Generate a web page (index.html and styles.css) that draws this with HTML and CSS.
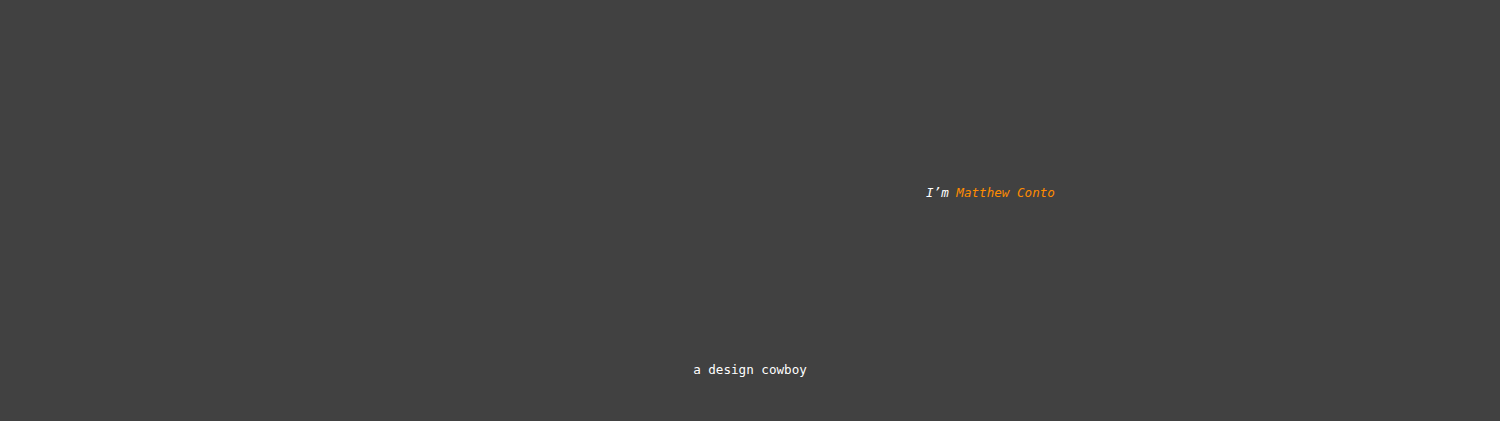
FILE: index.html
```html
<!DOCTYPE html>
<html>
<head>
<meta charset="utf-8">
<link rel="stylesheet" href="styles.css">
</head>
<body>
<main class="page">
  <section class="intro">
    <p class="name">I’m <span class="accent">Matthew Conto</span></p>
  </section>
  <section class="tagline">
    <p class="role">a design cowboy</p>
  </section>
</main>
</body>
</html>
```
FILE: styles.css
```css
html, body {
  margin: 0;
  padding: 0;
  background: #414141;
  height: 100%;
}
.page {
  height: 421px;
  display: flex;
  flex-direction: column;
  font-family: "DejaVu Sans Mono", "Liberation Mono", monospace;
  font-size: 12.6px;
  color: #ffffff;
}
.intro {
  height: 193px;
  display: flex;
  align-items: flex-end;
  padding-left: 926px;
}
.name {
  margin: 0;
  font-style: italic;
  line-height: 15px;
  transform: translateY(7px);
}
.accent {
  color: #ff8c00;
}
.tagline {
  flex: 1;
  display: flex;
  justify-content: center;
  align-items: flex-end;
  padding-bottom: 44px;
}
.role {
  margin: 0;
  line-height: 15px;
}
```
